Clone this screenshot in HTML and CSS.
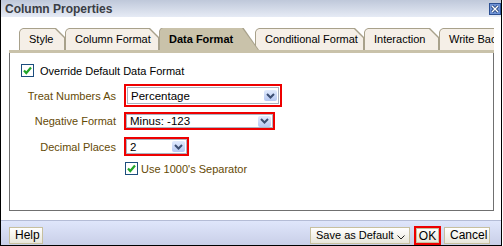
FILE: index.html
```html
<!DOCTYPE html>
<html lang="en">
<head>
    <meta charset="UTF-8">
    <meta name="viewport" content="width=device-width, initial-scale=1.0">
    <title>Column Properties</title>
    <link rel="stylesheet" href="styles.css">
</head>
<body>
    <div class="dialog">
        <div class="titlebar">
            <span class="title">Column Properties</span>
            <span class="close">
                <svg width="12" height="12" viewBox="0 0 12 12">
                    <rect x="0.5" y="0.5" width="11" height="11" fill="#6f93d6" stroke="#2b4f92"/>
                    <path d="M3 3 L9 9 M9 3 L3 9" stroke="#1d3a70" stroke-width="3"/>
                    <path d="M3 3 L9 9 M9 3 L3 9" stroke="#ffffff" stroke-width="1.4"/>
                </svg>
            </span>
        </div>
        <div class="tabs">
            <div class="tab w-style"><span>Style</span></div>
            <div class="tab w-colfmt"><span>Column Format</span></div>
            <div class="tab active w-datafmt"><span>Data Format</span></div>
            <div class="tab w-condfmt"><span>Conditional Format</span></div>
            <div class="tab w-inter"><span>Interaction</span></div>
            <div class="tab w-write"><span>Write Back</span></div>
        </div>
        <div class="panel">
            <div class="check-row">
                <span class="check">
                    <svg width="13" height="13" viewBox="0 0 13 13">
                        <rect x="0.5" y="0.5" width="12" height="12" fill="#fff" stroke="#1c4d7e"/>
                        <path d="M3 6.5 L5.3 9 L10 3.5" fill="none" stroke="#22a52a" stroke-width="2.2"/>
                    </svg>
                </span>
                <span>Override Default Data Format</span>
            </div>
            <div class="field row1">
                <span class="label">Treat Numbers As</span>
                <span class="hl pad">
                    <span class="select s1">Percentage<span class="arrow"><svg width="9" height="6" viewBox="0 0 9 6"><path d="M1 1 L4.5 4.5 L8 1" fill="none" stroke="#3c4e72" stroke-width="2"/></svg></span></span>
                </span>
            </div>
            <div class="field row2">
                <span class="label">Negative Format</span>
                <span class="hl">
                    <span class="select s2">Minus: -123<span class="arrow"><svg width="9" height="6" viewBox="0 0 9 6"><path d="M1 1 L4.5 4.5 L8 1" fill="none" stroke="#3c4e72" stroke-width="2"/></svg></span></span>
                </span>
            </div>
            <div class="field row3">
                <span class="label">Decimal Places</span>
                <span class="hl">
                    <span class="select s3">2<span class="arrow"><svg width="9" height="6" viewBox="0 0 9 6"><path d="M1 1 L4.5 4.5 L8 1" fill="none" stroke="#3c4e72" stroke-width="2"/></svg></span></span>
                </span>
            </div>
            <div class="check-row sep">
                <span class="check">
                    <svg width="13" height="13" viewBox="0 0 13 13">
                        <rect x="0.5" y="0.5" width="12" height="12" fill="#fff" stroke="#1c4d7e"/>
                        <path d="M3 6.5 L5.3 9 L10 3.5" fill="none" stroke="#22a52a" stroke-width="2.2"/>
                    </svg>
                </span>
                <span class="brown">Use 1000's Separator</span>
            </div>
        </div>
        <div class="footer">
            <button class="btn help">Help</button>
            <div class="actions">
                <button class="btn save"><span>Save as Default</span><svg class="caret" width="8" height="5" viewBox="0 0 8 5"><path d="M0.5 0.5 L4 4 L7.5 0.5" fill="none" stroke="#222" stroke-width="1"/></svg></button>
                <span class="hl ok-wrap"><button class="btn ok">OK</button></span>
                <button class="btn cancel">Cancel</button>
            </div>
        </div>
    </div>
</body>
</html>
```

FILE: styles.css
```css
* {
    margin: 0;
    padding: 0;
    box-sizing: border-box;
}
html, body {
    background: #fff;
}
body {
    font-family: "Liberation Sans", Arial, sans-serif;
    font-size: 11px;
    color: #000;
}
.dialog {
    width: 502px;
    height: 246px;
    border-left: 1px solid #000;
    border-right: 1px solid #000;
    border-bottom: 1px solid #000;
    display: flex;
    flex-direction: column;
    background: #fff;
}
.titlebar {
    height: 17px;
    display: flex;
    justify-content: space-between;
    align-items: center;
    padding: 0 0 0 4px;
    background: linear-gradient(#bfc8da, #e6ebf5);
}
.title {
    font-weight: bold;
    font-size: 12px;
    color: #3a3d44;
}
.close {
    display: flex;
    margin-top: 1px;
}
.tabs {
    margin: 11px 7px 0 8px;
    padding-left: 10px;
    display: flex;
    overflow: hidden;
    white-space: nowrap;
    border-bottom: 3px solid #c9c2aa;
    height: 25px;
}
.tab {
    flex: none;
    height: 22px;
    padding: 1px 1px 0 1px;
    background: #a8a18b;
    clip-path: polygon(0 4px, 1px 2px, 2px 1px, 4px 0, calc(100% - 9px) 0, 100% 9px, 100% 100%, 0 100%);
}
.tab span {
    display: block;
    height: 100%;
    padding-left: 9px;
    line-height: 21px;
    background: #f5efe7;
    clip-path: polygon(0 3px, 1px 1px, 3px 0, calc(100% - 9px) 0, 100% 9px, 100% 100%, 0 100%);
}
.tab.active {
    height: 23px;
    margin-top: -1px;
    margin-right: -4px;
    position: relative;
    z-index: 1;
    clip-path: polygon(0 4px, 1px 2px, 2px 1px, 4px 0, calc(100% - 16px) 0, 100% 100%, 0 100%);
}
.tab.active span {
    background: #c9c2aa;
    font-weight: bold;
    line-height: 23px;
    clip-path: polygon(0 3px, 1px 1px, 3px 0, calc(100% - 16px) 0, 100% 100%, 0 100%);
}
.w-style { width: 46px; }
.w-colfmt { width: 94px; }
.w-datafmt { width: 100px; }
.w-condfmt { width: 109px; }
.w-inter { width: 75px; }
.w-write { width: 70px; }
.panel {
    margin: 0 7px 0 8px;
    height: 158px;
    border: 1px solid #707070;
    border-top: none;
    padding: 11px 0 0 11px;
}
.check-row {
    display: flex;
    align-items: center;
    height: 13px;
}
.check {
    display: flex;
    margin-right: 6px;
}
.check-row.sep {
    margin-top: 6px;
    padding-left: 104px;
}
.check-row.sep .check {
    margin-right: 3px;
}
.brown,
.label {
    color: #654a05;
}
.field {
    display: flex;
    align-items: center;
    margin-left: -11px;
}
.label {
    width: 106px;
    text-align: right;
    margin-right: 8px;
}
.row1 { margin-top: 7px; }
.row2 { margin-top: 5px; }
.row3 { margin-top: 7px; }
.hl {
    display: inline-flex;
    border: 2px solid #ee0000;
}
.hl.pad {
    padding: 1px;
}
.select {
    display: flex;
    align-items: center;
    justify-content: space-between;
    border: 1px solid #aab2c0;
    padding: 0 1px 0 3px;
    background: #fff;
    font-size: 11.5px;
}
.s1 { width: 152px; height: 17px; }
.s2 { width: 147px; height: 14px; }
.s3 { width: 61px; height: 15px; }
.arrow {
    width: 13px;
    height: 11px;
    border-radius: 2px;
    background: linear-gradient(#e2ebfd, #b6c8f2);
    display: flex;
    align-items: center;
    justify-content: center;
}
.footer {
    margin-top: 9px;
    flex: 1;
    border-top: 1px solid #b4bcd6;
    background: linear-gradient(#dfe6fb, #c9cfe8);
    display: flex;
    justify-content: space-between;
    align-items: flex-start;
    padding: 6px 11px 0 8px;
}
.actions {
    display: flex;
    align-items: center;
    gap: 3px;
    margin-top: -1px;
}
.btn {
    font-family: "Liberation Sans", Arial, sans-serif;
    font-size: 12px;
    height: 17px;
    line-height: 15px;
    border: 1px solid #c7c09f;
    background: linear-gradient(#ffffff, #e8e6da);
    color: #000;
    padding: 0 5px;
    white-space: nowrap;
}
.help { width: 34px; }
.save {
    width: 100px;
    margin-right: 1px;
    padding: 0 4px 0 5px;
    font-size: 11px;
    display: flex;
    align-items: center;
    justify-content: space-between;
}
.caret {
    flex: none;
    margin-top: 3px;
}
.ok-wrap { padding: 0; }
.ok { width: 23px; height: 15px; padding: 0; }
.cancel { width: 46px; }
```
